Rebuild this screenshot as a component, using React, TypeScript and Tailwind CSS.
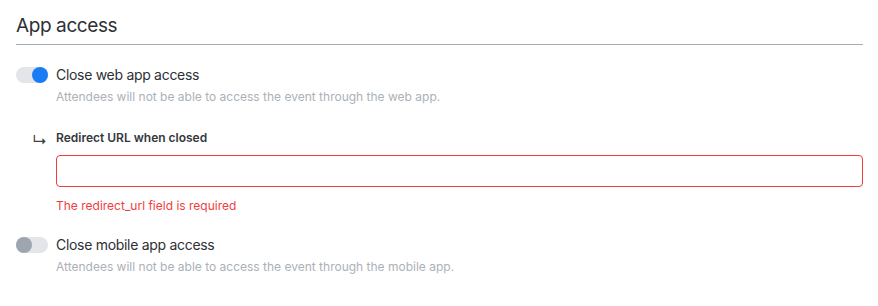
import { useState } from "react"

function Toggle({ on, onChange }: { on: boolean; onChange: () => void }) {
  return (
    <button
      type="button"
      onClick={onChange}
      className="relative h-4 w-8 shrink-0 rounded-full bg-[#e3e5e8]"
    >
      <span
        className={
          on
            ? "absolute top-0 left-4 h-4 w-4 rounded-full bg-[#1a7cf5]"
            : "absolute top-0 left-0 h-4 w-4 rounded-full bg-[#9da5ae]"
        }
      />
    </button>
  )
}

export default function App() {
  const [web, setWeb] = useState(true)
  const [mobile, setMobile] = useState(false)
  const [url, setUrl] = useState("")

  return (
    <div className="w-[878px] h-[306px] bg-white pl-4 pr-[15px] pt-[12px] font-['Inter',sans-serif] text-[#2d3035]">
      <h2 className="text-[19px] leading-[28px] tracking-[-0.4px] pb-[4px] border-b border-[#a5acb4]">App access</h2>

      <div className="mt-[22px] flex items-start gap-2">
        <Toggle on={web} onChange={() => setWeb(!web)} />
        <div className="-mt-[1px]">
          <div className="text-[14px] leading-[18px] tracking-[-0.3px]">Close web app access</div>
          <div className="mt-[5px] text-[12px] leading-[16px] text-[#abb1b8]">
            Attendees will not be able to access the event through the web app.
          </div>
        </div>
      </div>

      <div className="mt-[25px] flex gap-2">
        <div className="w-8 flex justify-end pt-[3px] pr-[1px] text-[15px] leading-[16px] text-[#3f4348]">↳</div>
        <div className="flex-1">
          <label className="block text-[12px] leading-[16px] font-semibold text-[#34373c]">Redirect URL when closed</label>
          <input
            value={url}
            onChange={(e) => setUrl(e.target.value)}
            className="mt-[9px] block h-[32px] w-full rounded border border-[#f23c3c] px-3 text-[13px] outline-none"
          />
          <div className="mt-[11px] text-[12px] leading-[16px] text-[#f23c3c]">The redirect_url field is required</div>
        </div>
      </div>

      <div className="mt-[23px] flex items-start gap-2">
        <Toggle on={mobile} onChange={() => setMobile(!mobile)} />
        <div className="-mt-[1px]">
          <div className="text-[14px] leading-[18px] tracking-[-0.3px]">Close mobile app access</div>
          <div className="mt-[5px] text-[12px] leading-[16px] text-[#abb1b8]">
            Attendees will not be able to access the event through the mobile app.
          </div>
        </div>
      </div>
    </div>
  )
}
